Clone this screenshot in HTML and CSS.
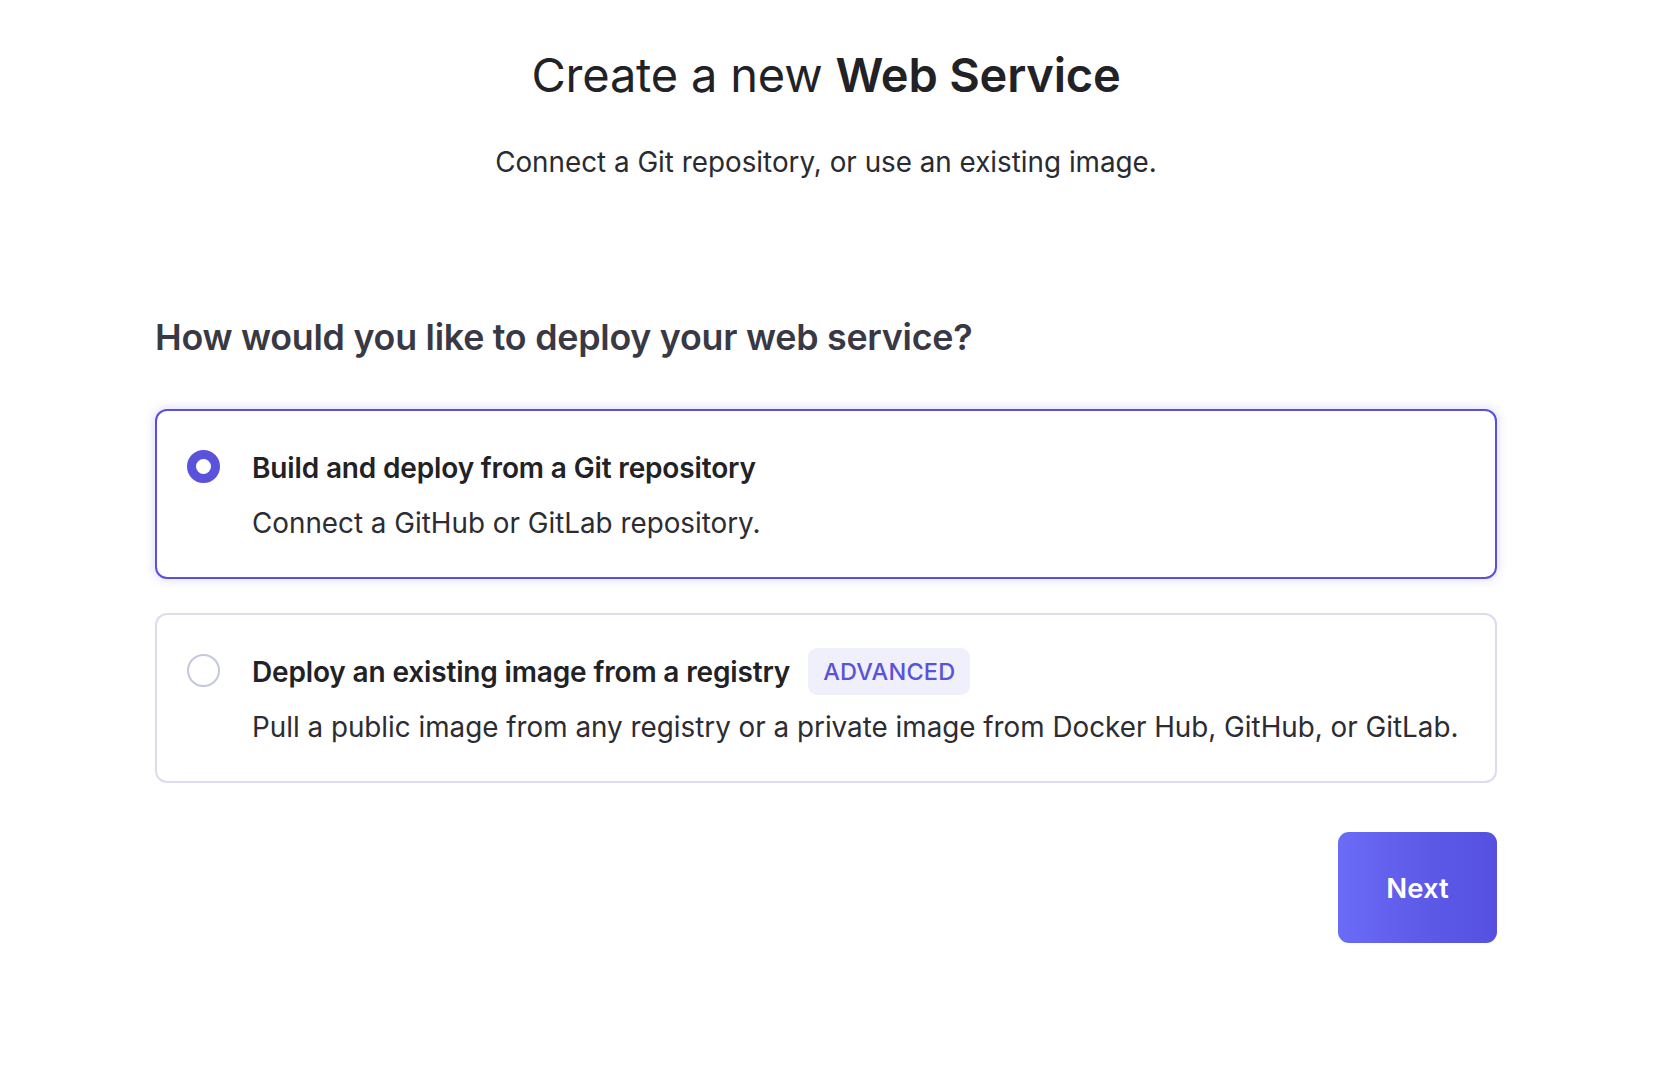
FILE: index.html
```html
<!DOCTYPE html>
<html lang="en">
<head>
<meta charset="utf-8">
<title>Create a new Web Service</title>
<link rel="stylesheet" href="styles.css">
</head>
<body>
<main class="page">
  <header class="intro">
    <h1 class="title">Create a new <strong>Web Service</strong></h1>
    <p class="subtitle">Connect a Git repository, or use an existing image.</p>
  </header>

  <section class="deploy">
    <h2 class="question">How would you like to deploy your web service?</h2>

    <div class="options">
      <label class="option option--selected">
        <span class="radio radio--on"></span>
        <span class="option-body">
          <span class="option-head">
            <span class="option-title">Build and deploy from a Git repository</span>
          </span>
          <span class="option-desc">Connect a GitHub or GitLab repository.</span>
        </span>
      </label>

      <label class="option">
        <span class="radio"></span>
        <span class="option-body">
          <span class="option-head">
            <span class="option-title">Deploy an existing image from a registry</span>
            <span class="badge">ADVANCED</span>
          </span>
          <span class="option-desc">Pull a public image from any registry or a private image from Docker Hub, GitHub, or GitLab.</span>
        </span>
      </label>
    </div>

    <div class="actions">
      <button class="next" type="button">Next</button>
    </div>
  </section>
</main>
</body>
</html>
```

FILE: styles.css
```css
html, body {
  margin: 0;
  padding: 0;
  background: #ffffff;
}

body {
  font-family: Inter, "Noto Sans", "Liberation Sans", sans-serif;
  color: #222228;
}

.page {
  width: 1342px;
  margin-left: 155px;
  padding-top: 47px;
}

.intro {
  text-align: center;
}

.title {
  margin: 0;
  font-size: 47px;
  line-height: 56px;
  font-weight: 400;
  color: #222226;
  letter-spacing: -0.2px;
}

.title strong {
  font-weight: 600;
}

.subtitle {
  margin: 43px 0 0;
  font-size: 27.8px;
  line-height: 32px;
  color: #2a2a30;
}

.deploy {
  margin-top: 139px;
}

.question {
  margin: 0;
  font-size: 35.8px;
  line-height: 40px;
  font-weight: 600;
  color: #383944;
  letter-spacing: -0.25px;
}

.options {
  margin-top: 52px;
  display: flex;
  flex-direction: column;
  gap: 34px;
}

.option {
  display: flex;
  align-items: flex-start;
  gap: 32px;
  padding: 33px 32px 38px 30px;
  border: 2px solid #dcdcee;
  border-radius: 12px;
  background: #ffffff;
  cursor: pointer;
}

.option--selected {
  border-color: #5a50dc;
  box-shadow: 0 0 8px 2px rgba(96, 86, 232, 0.18);
}

.radio {
  flex: none;
  width: 33px;
  height: 33px;
  margin-top: 6px;
  box-sizing: border-box;
  border-radius: 50%;
  border: 2px solid #c4c8dc;
  background: #fff;
}

.radio--on {
  border: 9px solid #5b52dc;
}

.option-body {
  display: flex;
  flex-direction: column;
  gap: 16px;
}

.option-head {
  display: flex;
  align-items: center;
  gap: 18px;
  min-height: 47px;
}

.option-title {
  font-size: 28px;
  line-height: 32px;
  font-weight: 600;
  color: #222226;
  letter-spacing: -0.15px;
}

.option-desc {
  font-size: 27.8px;
  line-height: 32px;
  font-weight: 400;
  color: #2c2c32;
}

.badge {
  display: inline-flex;
  align-items: center;
  height: 47px;
  padding: 0 15px;
  border-radius: 9px;
  background: #f0f0fc;
  color: #5a52d8;
  font-size: 23.5px;
  font-weight: 500;
  letter-spacing: 0.2px;
}

.actions {
  display: flex;
  justify-content: flex-end;
  margin-top: 49px;
}

.next {
  width: 159px;
  height: 111px;
  border: 0;
  border-radius: 11px;
  background: linear-gradient(90deg, #6a6cf6 0%, #5e5be9 50%, #5650e0 100%);
  color: #ffffff;
  font-family: Inter, "Noto Sans", "Liberation Sans", sans-serif;
  font-size: 27.5px;
  font-weight: 600;
  cursor: pointer;
}
```
